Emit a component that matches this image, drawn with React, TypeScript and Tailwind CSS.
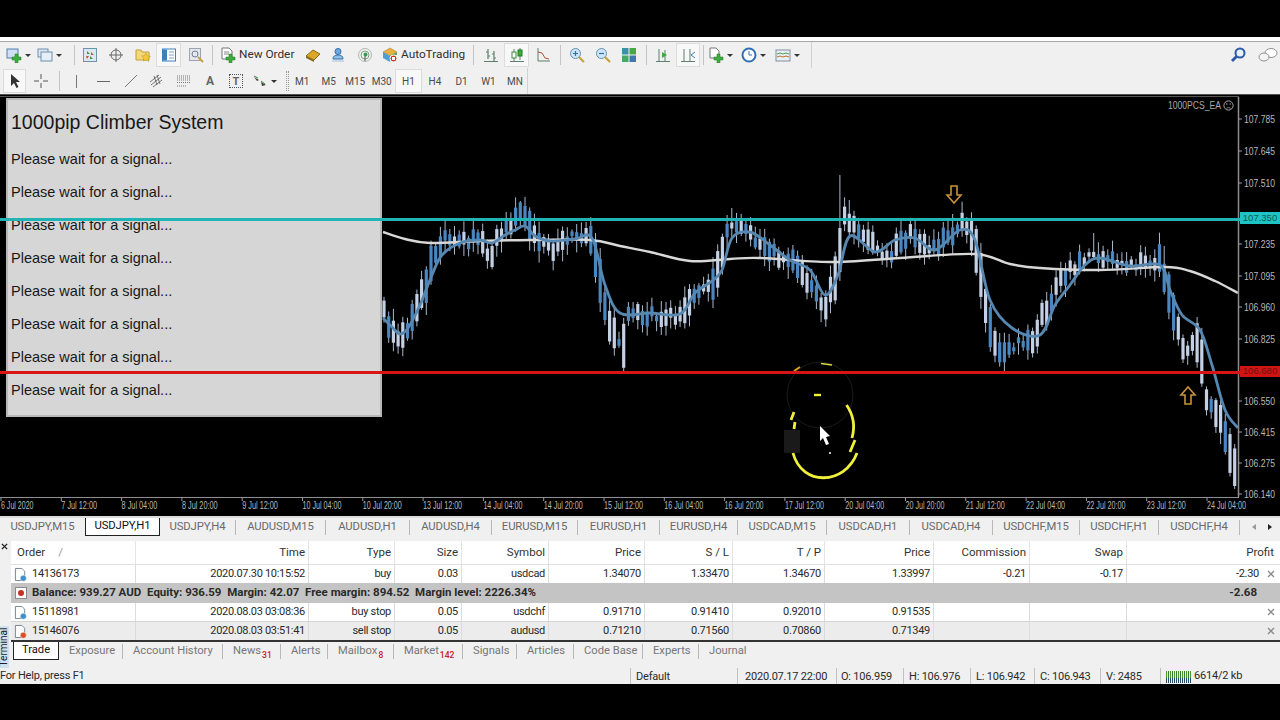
import React from 'react';

// ---- chart data ----
const candlePath: [number, number][] = [
  [383, 312], [392, 330], [402, 340], [412, 322], [425, 290], [436, 250], [445, 240], [460, 238], [478, 240], [490, 258],
  [500, 235], [515, 218], [523, 208], [535, 240], [550, 250], [570, 238], [590, 240], [598, 265], [605, 310], [618, 345],
  [623, 355], [628, 313], [650, 315], [680, 318], [695, 290], [715, 280], [728, 225], [745, 230], [770, 250], [795, 265],
  [815, 290], [825, 308], [838, 270], [844, 215], [860, 230], [875, 250], [890, 255], [910, 232], [930, 250], [950, 235],
  [960, 222], [975, 240], [985, 300], [997, 355], [1010, 345], [1030, 345], [1055, 290], [1070, 270], [1090, 255], [1100, 258],
  [1120, 265], [1160, 262], [1168, 290], [1175, 320], [1185, 350], [1200, 345], [1205, 400], [1215, 410], [1228, 440], [1235, 470], [1238, 450],
];

const emaPoints: [number, number][] = [
  [383, 318], [392, 327], [400, 334], [408, 328], [420, 305], [432, 275], [442, 255], [460, 243], [480, 240], [492, 243], [505, 235], [515, 230],
  [525, 226], [535, 236], [550, 241], [575, 239], [592, 238], [605, 285], [620, 313], [650, 313], [680, 314], [695, 293], [712, 281], [722, 270],
  [732, 238], [750, 232], [770, 245], [790, 260], [810, 270], [825, 295], [838, 275], [850, 236], [875, 252], [895, 240], [915, 238], [935, 250],
  [960, 230], [975, 240], [990, 300], [1012, 328], [1040, 335], [1055, 305], [1070, 285], [1085, 265], [1100, 258], [1130, 266], [1160, 265],
  [1170, 290], [1182, 315], [1200, 330], [1212, 365], [1225, 410], [1238, 428],
];
const maPoints: [number, number][] = [
  [383, 232], [405, 239], [430, 243], [480, 241], [530, 240], [590, 240], [620, 246], [650, 252], [690, 261], [730, 259], [760, 258], [830, 262],
  [900, 258], [975, 254], [1010, 264], [1040, 268], [1100, 270], [1165, 267], [1190, 271], [1215, 281], [1238, 293],
];

const priceLabels: [string, number][] = [
  ['107.785', 119], ['107.645', 151], ['107.510', 183], ['107.235', 244], ['107.095', 276], ['106.960', 307],
  ['106.825', 339], ['106.550', 401], ['106.415', 432], ['106.275', 463], ['106.140', 494],
];

const timeLabels = [
  '6 Jul 2020', '7 Jul 12:00', '8 Jul 04:00', '8 Jul 20:00', '9 Jul 12:00', '10 Jul 04:00', '10 Jul 20:00',
  '13 Jul 12:00', '14 Jul 04:00', '14 Jul 20:00', '15 Jul 12:00', '16 Jul 04:00', '16 Jul 20:00', '17 Jul 12:00',
  '20 Jul 04:00', '20 Jul 20:00', '21 Jul 12:00', '22 Jul 04:00', '22 Jul 20:00', '23 Jul 12:00', '24 Jul 04:00',
];

function smooth(p: [number, number][]) {
  let d = `M${p[0][0]} ${p[0][1]}`;
  for (let i = 0; i < p.length - 1; i++) {
    const a = p[Math.max(i - 1, 0)];
    const b = p[i];
    const c = p[i + 1];
    const e = p[Math.min(i + 2, p.length - 1)];
    d += `C${b[0] + (c[0] - a[0]) / 6} ${b[1] + (c[1] - a[1]) / 6} ${c[0] - (e[0] - b[0]) / 6} ${c[1] - (e[1] - b[1]) / 6} ${c[0]} ${c[1]}`;
  }
  return d;
}

function centerAt(x: number) {
  for (let i = 1; i < candlePath.length; i++) {
    const [x0, y0] = candlePath[i - 1];
    const [x1, y1] = candlePath[i];
    if (x <= x1) return y0 + ((y1 - y0) * (x - x0)) / (x1 - x0);
  }
  return 450;
}

function makeCandles() {
  let seed = 77;
  const rnd = () => {
    seed = (seed * 16807) % 2147483647;
    return seed / 2147483647;
  };
  const list = [];
  const spikes: Record<number, number> = { 842: 175, 851: 200, 522: 201, 730: 208, 955: 214, 1092: 233, 1162: 246, 623: 374 };
  for (let x = 384; x < 1238; x += 4.7) {
    const slope = Math.abs(centerAt(x + 4.7) - centerAt(x));
    const y = centerAt(x) + (rnd() - 0.5) * 10;
    const size = Math.min(3 + rnd() * 13 + slope * 1.3, 44);
    const top = y - size / 2;
    const bottom = y + size / 2;
    let hi = top - 2 - rnd() * 10;
    let lo = Math.min(bottom + 2 + rnd() * 10, 489);
    for (const k of Object.keys(spikes)) {
      const sx = Number(k);
      if (Math.abs(sx - x) < 2.4) {
        if (spikes[sx] < y) hi = spikes[sx];
        else lo = spikes[sx];
      }
    }
    list.push({ x, top, size: Math.min(size, 486 - top), hi, lo, up: rnd() > 0.5 });
  }
  return list;
}
const candles = makeCandles();

function Chart() {
  return (
    <svg viewBox="0 95 1280 421" className="block h-[421px] w-[1280px]">
      {candles.map((c, i) => (
        <g key={i}>
          <line x1={c.x} x2={c.x} y1={c.hi} y2={c.lo} stroke="#a8b8cc" strokeWidth="1" />
          <rect x={c.x - 1.6} y={c.top} width="3.2" height={c.size} fill={c.up ? '#4a86c0' : '#c4d0e4'} />
        </g>
      ))}
      <path d={smooth(maPoints)} fill="none" stroke="#d8d8d8" strokeWidth="2.4" />
      <path d={smooth(emaPoints)} fill="none" stroke="#5587b0" strokeWidth="2.8" />

      {/* arrows */}
      <path d="M951 186h6v9h4l-7 8-7-8h4z" fill="none" stroke="#c8923c" strokeWidth="1.6" />
      <path d="M1185 404v-9h-4l7-8 7 8h-4v9z" fill="none" stroke="#c8923c" strokeWidth="1.6" />

      {/* axes */}
      <line x1="1238.5" x2="1238.5" y1="97" y2="497" stroke="#8e8e8e" strokeWidth="1.5" />
      <line x1="0" x2="1239" y1="497.5" y2="497.5" stroke="#8e8e8e" strokeWidth="1" />
      <line x1="0" x2="1239" y1="96.5" y2="96.5" stroke="#555555" strokeWidth="1" />
      {priceLabels.map(([label, y]) => (
        <g key={label}>
          <line x1="1238" x2="1242" y1={y} y2={y} stroke="#9a9a9a" />
          <text x="1244" y={y + 3.5} fill="#b8b8b8" fontSize="10" fontFamily="Liberation Sans, sans-serif" textLength="31" lengthAdjust="spacingAndGlyphs">
            {label}
          </text>
        </g>
      ))}
      {timeLabels.map((label, i) => (
        <g key={label}>
          <line x1={1 + i * 60.3} x2={1 + i * 60.3} y1="497" y2="501" stroke="#9a9a9a" />
          <text x={1 + i * 60.3} y="509" fill="#b8b8b8" fontSize="10" fontFamily="Liberation Sans, sans-serif" textLength={label.length * 3.25} lengthAdjust="spacingAndGlyphs">
            {label}
          </text>
        </g>
      ))}

      {/* expert label */}
      <text x="1168" y="108.5" fill="#a8a8a8" fontSize="10" fontFamily="Liberation Sans, sans-serif" textLength="53" lengthAdjust="spacingAndGlyphs">1000PCS_EA</text>
      <circle cx="1228.5" cy="105.5" r="4.6" fill="none" stroke="#a8a8a8" />
      <circle cx="1226.8" cy="104" r="0.7" fill="#a8a8a8" />
      <circle cx="1230.2" cy="104" r="0.7" fill="#a8a8a8" />
      <path d="M1226.3 108.4q2.2-2 4.4 0" fill="none" stroke="#a8a8a8" strokeWidth="0.8" />

      {/* highlight circle, broken up */}
      <circle cx="820" cy="395" r="33" fill="none" stroke="#1c1c1c" />
      <rect x="784" y="430" width="16" height="23" fill="#1a1a1a" />
      <path d="M846.5 405Q857 420 852 438M855 440L850 452M793 453C802 487 845 485 857 453" fill="none" stroke="#f0f03c" strokeWidth="2.800" />
      <path d="M794 412L791 420M795 422L794 429" fill="none" stroke="#f0f03c" strokeWidth="2.800" />
      <path d="M794 371L800 367" stroke="#e0a020" strokeWidth="2" />
      <path d="M821 363.5L832 365" stroke="#d8d840" strokeWidth="1.4" />
      <path d="M814 395H821" stroke="#f0f03c" strokeWidth="2.400" />
      <path d="M820 426V441L823 438L826 445L829 444L826 437L830 436Z" fill="#ffffff" />
      <circle cx="830" cy="453" r="1" fill="#ffffff" />
    </svg>
  );
}

// ---- toolbar icons ----
const Ic = ({ children }: { children: React.ReactNode }) => (
  <svg viewBox="0 0 16 16" className="h-4 w-4 shrink-0">{children}</svg>
);
const Plus = () => <path d="M9 7h3v3h3v3h-3v3H9v-3H6v-3h3z" fill="#3cae3c" stroke="#207a20" strokeWidth="0.5" />;
const Dd = () => <span className="ml-[3px] h-0 w-0 border-x-[3px] border-t-[3px] border-x-transparent border-t-[#333333]" />;

const NewChart = () => <Ic><rect x="1" y="2" width="11" height="9" fill="#cfe0f2" stroke="#4f7fae" /><Plus /></Ic>;
const Profiles = () => <Ic><rect x="1" y="2" width="10" height="8" fill="#dde8f3" stroke="#6d8db0" /><rect x="4" y="5" width="11" height="9" fill="#e8eef6" stroke="#6d8db0" /></Ic>;
const MarketWatch = () => <Ic><rect x="1.5" y="1.5" width="13" height="13" fill="#dbe8f2" stroke="#6e93ad" /><path d="M5 4l3 3H5zM8 9l3 3H8z" fill="#3a9a3a" /><path d="M9 5l3 3-3 0zM4 9h3l-2 3z" fill="#d85020" /></Ic>;
const Target = () => <Ic><circle cx="8" cy="8" r="5" fill="none" stroke="#666666" /><path d="M8 1v14M1 8h14" stroke="#666666" /></Ic>;
const FolderStar = () => <Ic><path d="M1 3h5l1 2h7v8H1z" fill="#f4d87a" stroke="#c0a040" /><path d="M11 6l1.4 3 3 .4-2.2 2 .6 3-2.8-1.5L8.200 14l.6-3-2.2-2 3-.4z" fill="#f6c93a" stroke="#b09020" strokeWidth="0.5" /></Ic>;
const Navigator = () => <Ic><rect x="1.5" y="2" width="13" height="12" fill="#ffffff" stroke="#3f7fb8" /><rect x="2" y="2.500" width="4" height="11" fill="#3f7fb8" /><path d="M8 5h5M8 8h5M8 11h5" stroke="#7f9fc0" /></Ic>;
const Tester = () => <Ic><rect x="1.5" y="1.5" width="11" height="12" fill="#e4e8ee" stroke="#9aa4b0" /><circle cx="7" cy="7" r="3" fill="none" stroke="#708090" /><path d="M10 10l5 5" stroke="#c8a040" strokeWidth="2" /></Ic>;
const NewOrder = () => <Ic><path d="M2 1h7l3 3v8H2z" fill="#ffffff" stroke="#777777" /><path d="M4 5h5M4 7h5" stroke="#888888" /><Plus /></Ic>;
const Gold = () => <Ic><path d="M1 9l7-6 7 4-6 6z" fill="#d8a828" stroke="#8a6a18" /><path d="M1 9l8 4v2L1 11z" fill="#8a6a18" /></Ic>;
const Person = () => <Ic><circle cx="8" cy="4.500" r="3" fill="#6fa8dc" stroke="#2f6fa8" /><path d="M3 12q0-4 5-4t5 4z" fill="#8fc0e8" stroke="#2f6fa8" /><path d="M2 13h12v2H2z" fill="#c8d8e8" /></Ic>;
const Signal = () => <Ic><circle cx="8" cy="8" r="6.500" fill="none" stroke="#b0b8b0" /><circle cx="8" cy="8" r="4" fill="none" stroke="#80a880" /><circle cx="8.500" cy="7.500" r="2" fill="#3a9a5a" /><path d="M8 9v5" stroke="#555555" /></Ic>;
const Auto = () => <Ic><path d="M1 5l7-4 7 4-7 4z" fill="#e8b040" stroke="#a07820" strokeWidth="0.5" /><path d="M1 5v6l7 4V9z" fill="#4f9fd0" /><path d="M15 5v3H8V9z" fill="#58a858" /><circle cx="11.500" cy="11.500" r="3.500" fill="#d03020" stroke="#ffffff" /><rect x="10" y="10" width="3" height="3" fill="#ffffff" /></Ic>;
const Bars = () => <Ic><path d="M5 2v10M3 5h2M5 9h2M11 4v10M9 7h2M11 11h2M1 14.500h14" stroke="#5f7f6f" strokeWidth="1.2" /></Ic>;
const Candle = () => <Ic><path d="M5 2v12M11 1v12M1 14.500h14" stroke="#5f7f6f" /><rect x="3" y="5" width="4" height="6" fill="#ffffff" stroke="#3a8a3a" /><rect x="9" y="3" width="4" height="6" fill="#3aae3a" stroke="#207a20" /></Ic>;
const LineC = () => <Ic><path d="M3 1v13h12" fill="none" stroke="#5f7f6f" /><path d="M3 5l4 1 3 5 4 1" fill="none" stroke="#b05030" /></Ic>;
const ZoomIn = () => <Ic><circle cx="6.500" cy="6.500" r="5" fill="#cfe4f4" stroke="#5f8fb4" /><path d="M4 6.500h5M6.500 4v5" stroke="#2f6fa8" strokeWidth="1.200" /><path d="M10 10l5 5" stroke="#c8a040" strokeWidth="2.200" /></Ic>;
const ZoomOut = () => <Ic><circle cx="6.500" cy="6.500" r="5" fill="#cfe4f4" stroke="#5f8fb4" /><path d="M4 6.500h5" stroke="#2f6fa8" strokeWidth="1.200" /><path d="M10 10l5 5" stroke="#c8a040" strokeWidth="2.200" /></Ic>;
const Tile = () => <Ic><rect x="1" y="1" width="6.500" height="6.500" fill="#3f8fa8" /><rect x="8.500" y="1" width="6.500" height="6.500" fill="#48a848" /><rect x="1" y="8.500" width="6.500" height="6.500" fill="#48a868" /><rect x="8.500" y="8.500" width="6.500" height="6.500" fill="#3f78b0" /></Ic>;
const AutoScroll = () => <Ic><path d="M4 2v12M1 14.500h14M10 3v11" stroke="#5f7f6f" /><path d="M7 5l5 3-5 3z" fill="#3aae3a" /></Ic>;
const Shift = () => <Ic><path d="M4 2v12M1 14.500h14M10 2v12" stroke="#5f7f6f" /><path d="M15 5l-4 3 4 3" fill="none" stroke="#3f7fb8" /></Ic>;
const Indicators = () => <Ic><path d="M2 1h6l3 3v7H2z" fill="#ffffff" stroke="#777777" /><Plus /></Ic>;
const Clock = () => <Ic><circle cx="8" cy="8" r="6.500" fill="#ffffff" stroke="#2f6fb8" strokeWidth="2" /><path d="M8 4v4h3" fill="none" stroke="#2f6fb8" /></Ic>;
const Template = () => <Ic><rect x="1" y="3" width="14" height="11" fill="#e8eef4" stroke="#7f8f9f" /><path d="M2 7l3-1 3 1 3-1 3 1" fill="none" stroke="#4f9f4f" /><path d="M2 10l3-1 3 1 3-1 3 1" fill="none" stroke="#c07030" /></Ic>;

const Sep = () => <span className="mx-auto h-[20px] w-px bg-[#c4c4c4]" />;
const Slot = ({ className, children }: { className: string; children?: React.ReactNode }) => (
  <div className={`flex h-full shrink-0 items-center justify-center ${className}`}>{children}</div>
);
const Active = ({ className, children }: { className: string; children: React.ReactNode }) => (
  <div className={`flex shrink-0 items-center justify-center border border-[#dcdcdc] bg-[#f8f8f8] ${className}`}>{children}</div>
);

function TopRow() {
  return (
    <div className="flex h-[26px] bg-[#f0f0f0]">
      <div className="flex h-full w-[812px] items-center border-r border-[#d2d2d2] pl-[6px] text-[11.800px] text-[#303030]">
        <Slot className="w-[30px] justify-start"><NewChart /><Dd /></Slot>
        <Slot className="w-[34px] justify-start pl-[1px]"><Profiles /><Dd /></Slot>
        <Slot className="w-[8px]"><Sep /></Slot>
        <Slot className="w-[24px]"><MarketWatch /></Slot>
        <Slot className="w-[28px]"><Target /></Slot>
        <Slot className="w-[26px]"><FolderStar /></Slot>
        <Active className="h-[24px] w-[25px]"><Navigator /></Active>
        <Slot className="w-[29px]"><Tester /></Slot>
        <Slot className="w-[4px]"><Sep /></Slot>
        <Slot className="w-[86px] justify-start pl-[6px]"><NewOrder /><span className="ml-[3px] whitespace-nowrap">New Order</span></Slot>
        <Slot className="w-[25px]"><Gold /></Slot>
        <Slot className="w-[26px]"><Person /></Slot>
        <Slot className="w-[27px]"><Signal /></Slot>
        <Slot className="w-[90px] justify-start pl-[4px]"><Auto /><span className="ml-[3px] whitespace-nowrap">AutoTrading</span></Slot>
        <Slot className="w-[10px]"><Sep /></Slot>
        <Slot className="w-[26px]"><Bars /></Slot>
        <Active className="h-[24px] w-[25px]"><Candle /></Active>
        <Slot className="w-[27px]"><LineC /></Slot>
        <Slot className="w-[8px]"><Sep /></Slot>
        <Slot className="w-[26px]"><ZoomIn /></Slot>
        <Slot className="w-[26px]"><ZoomOut /></Slot>
        <Slot className="w-[26px]"><Tile /></Slot>
        <Slot className="w-[8px]"><Sep /></Slot>
        <Slot className="w-[26px]"><AutoScroll /></Slot>
        <Active className="h-[24px] w-[24px]"><Shift /></Active>
        <Slot className="w-[6px]"><Sep /></Slot>
        <Slot className="w-[33px] justify-start pl-[2px]"><Indicators /><Dd /></Slot>
        <Slot className="w-[34px] justify-start pl-[2px]"><Clock /><Dd /></Slot>
        <Slot className="w-[30px] justify-start pl-[2px]"><Template /><Dd /></Slot>
      </div>
      <div className="flex flex-1 items-center pl-[418px]">
        <svg viewBox="0 0 16 16" className="h-4 w-4">
          <circle cx="10" cy="6" r="4.500" fill="#e8f0fa" stroke="#2a5aa8" strokeWidth="2" />
          <path d="M6.500 9.500L2 14" stroke="#2a5aa8" strokeWidth="2.800" />
        </svg>
        <svg viewBox="0 0 20 16" className="ml-[12px] h-[16px] w-[20px]">
          <ellipse cx="13" cy="6" rx="6" ry="4.500" fill="#ffffff" stroke="#909090" />
          <ellipse cx="6" cy="10" rx="5" ry="4" fill="#f4f4f4" stroke="#909090" />
        </svg>
      </div>
    </div>
  );
}

const periods = ['M1', 'M5', 'M15', 'M30'];

function BottomRow() {
  return (
    <div className="flex h-[26px] bg-[#f0f0f0]">
      <div className="flex h-full w-[528px] items-center border-r border-[#d2d2d2] pl-[3px] text-[10px] text-[#4a4a4a]">
        <Active className="h-[24px] w-[23px]">
          <svg viewBox="0 0 16 16" className="h-4 w-4"><path d="M4 1v12l3-3 2.500 5 2-1L9 9h4z" fill="#333333" /></svg>
        </Active>
        <Slot className="w-[30px]">
          <svg viewBox="0 0 16 16" className="h-4 w-4"><path d="M8 1v5M8 10v5M1 8h5M10 8h5" stroke="#555555" /></svg>
        </Slot>
        <Slot className="w-[7px]"><Sep /></Slot>
        <Slot className="w-[27px]"><span className="h-[13px] w-px bg-[#777777]" /></Slot>
        <Slot className="w-[27px]"><span className="h-px w-[13px] bg-[#666666]" /></Slot>
        <Slot className="w-[27px]">
          <svg viewBox="0 0 16 16" className="h-4 w-4"><path d="M2 14L14 2" stroke="#777777" /></svg>
        </Slot>
        <Slot className="w-[26px]">
          <svg viewBox="0 0 16 16" className="h-4 w-4"><path d="M1 9L10 2M2 12L12 4M4 14L13 7M5 3l3 9M8 2l3 9" stroke="#666666" strokeWidth="0.900" /></svg>
        </Slot>
        <Slot className="w-[27px]">
          <svg viewBox="0 0 16 16" className="h-4 w-4"><path d="M1 3h14M1 5h14M1 7h14M1 9.500h14M1 13h9" stroke="#777777" strokeDasharray="1 1" /></svg>
        </Slot>
        <Slot className="w-[26px]"><span className="text-[12px] font-bold text-[#666666]">A</span></Slot>
        <Slot className="w-[26px]">
          <div className="flex h-[14px] w-[14px] items-center justify-center border border-dotted border-[#555555] text-[11px] font-bold leading-none text-[#666666]">T</div>
        </Slot>
        <Slot className="w-[28px] justify-end">
          <svg viewBox="0 0 16 16" className="h-4 w-4"><path d="M2 4l5 3-2 1zM9 9l5 3-4 1z" fill="#444444" /><path d="M2 3l4 2M9 8l4 3" stroke="#3a8a3a" /></svg>
          <Dd />
        </Slot>
        <Slot className="w-[12px] justify-end"><span className="h-[20px] w-[3px] border-x border-dotted border-[#9a9a9a]" /></Slot>
        {periods.map(p => (
          <div key={p} className="flex h-full w-[26.500px] shrink-0 items-center justify-center">{p}</div>
        ))}
        <Active className="h-[24px] w-[27px] bg-[#f8f8f8]">H1</Active>
        <div className="flex h-full w-[26px] shrink-0 items-center justify-center">H4</div>
        <div className="flex h-full w-[27px] shrink-0 items-center justify-center">D1</div>
        <div className="flex h-full w-[27px] shrink-0 items-center justify-center">W1</div>
        <div className="flex h-full w-[26px] shrink-0 items-center justify-center">MN</div>
      </div>
    </div>
  );
}

// ---- signal panel over the chart ----
const signalRows = [0, 1, 2, 3, 4, 5, 6, 7];

function SignalPanel() {
  return (
    <div className="absolute left-[6px] top-[3px] h-[319px] w-[376px] border-2 border-[#b8b8b8] bg-[#d6d6d6] pl-[3px] font-['Liberation_Sans',sans-serif] text-[#181818]">
      <div className="pt-[10px] text-[19.500px] leading-[24px]">1000pip Climber System</div>
      <div className="mt-[9px] flex flex-col">
        {signalRows.map(r => (
          <div key={r} className="flex h-[33px] items-center text-[14.500px]">Please wait for a signal...</div>
        ))}
      </div>
    </div>
  );
}

// ---- symbol tabs ----
const chartTabs = [
  { label: 'USDJPY,M15', w: 'w-[85px]' },
  { label: 'USDJPY,H1', w: 'w-[75px]', active: true },
  { label: 'USDJPY,H4', w: 'w-[76px]' },
  { label: 'AUDUSD,M15', w: 'w-[90px]' },
  { label: 'AUDUSD,H1', w: 'w-[84px]' },
  { label: 'AUDUSD,H4', w: 'w-[82px]' },
  { label: 'EURUSD,M15', w: 'w-[86px]' },
  { label: 'EURUSD,H1', w: 'w-[82px]' },
  { label: 'EURUSD,H4', w: 'w-[78px]' },
  { label: 'USDCAD,M15', w: 'w-[89px]' },
  { label: 'USDCAD,H1', w: 'w-[83px]' },
  { label: 'USDCAD,H4', w: 'w-[83px]' },
  { label: 'USDCHF,M15', w: 'w-[87px]' },
  { label: 'USDCHF,H1', w: 'w-[79px]' },
  { label: 'USDCHF,H4', w: 'w-[81px]' },
];

function ChartTabs() {
  return (
    <div className="flex h-[25px] items-start border-t-2 border-[#dcdcdc] bg-[#f0f0f0] text-[11.300px] tracking-[-0.1px] text-[#6a6a6a]">
      {chartTabs.map((t, i) =>
        t.active ? (
          <div key={t.label} className={`flex h-[18px] shrink-0 items-center justify-center border-x border-b border-[#222222] bg-white text-[#111111] ${t.w}`}>
            {t.label}
          </div>
        ) : (
          <div key={t.label} className={`mt-[2px] flex h-[15px] shrink-0 items-center justify-center ${t.w} ${i > 1 ? 'border-r border-[#b8b8b8]' : ''}`}>
            {t.label}
          </div>
        ),
      )}
      <div className="mt-[6px] ml-[12px] flex items-center gap-[12px]">
        <span className="h-0 w-0 border-y-[3px] border-r-[4px] border-y-transparent border-r-[#999999]" />
        <span className="h-0 w-0 border-y-[3px] border-l-[4px] border-y-transparent border-l-[#222222]" />
      </div>
    </div>
  );
}

// ---- terminal ----
const colGrid = 'grid grid-cols-[125px_173px_86px_67px_87px_96px_88px_92px_109px_96px_97px_153px]';
const headers = ['Time', 'Type', 'Size', 'Symbol', 'Price', 'S / L', 'T / P', 'Price', 'Commission', 'Swap'];

const DocIcon = ({ dot }: { dot: string }) => (
  <svg viewBox="0 0 14 16" className="ml-[3px] h-[15px] w-[13px] shrink-0">
    <path d="M1.500 1.500h7l3 3v10h-10z" fill="#ffffff" stroke="#6f7f8f" />
    <circle cx="10" cy="12" r="3.300" fill={dot} stroke="#ffffff" strokeWidth="0.500" />
  </svg>
);

const Closer = () => (
  <svg viewBox="0 0 8 8" className="h-2 w-2"><path d="M1 1l6 6M7 1L1 7" stroke="#8a8a8a" strokeWidth="1.300" /></svg>
);

function OrderRow({ id, dot, cells, profit, className }: { id: string; dot: string; cells: string[]; profit: string; className: string }) {
  return (
    <div className={`${colGrid} tracking-[-0.3px] ${className}`}>
      <div className="flex items-center gap-[5px] border-r border-[#dcdcdc]">
        <DocIcon dot={dot} />
        <span>{id}</span>
      </div>
      {cells.map((c, i) => (
        <div key={i} className="flex items-center justify-end border-r border-[#dcdcdc] pr-[3px]">{c}</div>
      ))}
      <div className="flex items-center justify-end pr-[5px]">
        <span className="mr-[8px]">{profit}</span>
        <Closer />
      </div>
    </div>
  );
}

const termTabs = [
  { label: 'Exposure', w: 'w-[64px]' },
  { label: 'Account History', w: 'w-[100px]' },
  { label: 'News', sub: '31', w: 'w-[58px]' },
  { label: 'Alerts', w: 'w-[47px]' },
  { label: 'Mailbox', sub: '8', w: 'w-[66px]' },
  { label: 'Market', sub: '142', w: 'w-[69px]' },
  { label: 'Signals', w: 'w-[54px]' },
  { label: 'Articles', w: 'w-[57px]' },
  { label: 'Code Base', w: 'w-[69px]' },
  { label: 'Experts', w: 'w-[56px]' },
  { label: 'Journal', w: 'w-[52px]' },
];

function Terminal() {
  return (
    <div className="flex h-[127px] bg-[#f0f0f0] text-[11px] text-[#2a2a2a]">
      <div className="flex w-[11px] shrink-0 flex-col justify-between">
        <div className="pl-[1px] pt-[2px]">
          <svg viewBox="0 0 8 8" className="h-[7px] w-[7px]"><path d="M1 1l6 6M7 1L1 7" stroke="#222222" strokeWidth="1.600" /></svg>
        </div>
        <div className="flex h-[42px] w-[9px] items-center justify-center bg-[#cfe0ee]">
          <span className="-rotate-90 whitespace-nowrap text-[10px] leading-none text-[#222222]">Terminal</span>
        </div>
      </div>
      <div className="flex min-w-0 flex-1 flex-col">
        <div className={`${colGrid} h-[23px] bg-white text-[11.500px] text-[#333333]`}>
          <div className="flex items-center border-r border-[#e4e4e4] pl-[6px]">
            Order<span className="ml-[13px] text-[#9a9a9a]">/</span>
          </div>
          {headers.map((h, i) => (
            <div key={i} className="flex items-center justify-end border-r border-[#e4e4e4] pr-[3px]">{h}</div>
          ))}
          <div className="flex items-center justify-end pr-[6px]">Profit</div>
        </div>
        <OrderRow
          className="h-[19px] border-t border-[#e0e0e0] bg-white"
          id="14136173"
          dot="#3f8fc8"
          cells={['2020.07.30 10:15:52', 'buy', '0.03', 'usdcad', '1.34070', '1.33470', '1.34670', '1.33997', '-0.21', '-0.17']}
          profit="-2.30"
        />
        <div className="flex h-[20px] items-center justify-between bg-[#c4c4c4] pr-[23px] text-[11.500px] font-bold">
          <div className="flex items-center">
            <div className="ml-[4px] flex h-[12px] w-[12px] items-center justify-center border border-[#8a8a8a] bg-white">
              <span className="h-[6px] w-[6px] rounded-full bg-[#c83020]" />
            </div>
            <span className="ml-[5px] whitespace-pre">Balance: 939.27 AUD  Equity: 936.59  Margin: 42.07  Free margin: 894.52  Margin level: 2226.34%</span>
          </div>
          <span>-2.68</span>
        </div>
        <OrderRow
          className="h-[18px] bg-white"
          id="15118981"
          dot="#3f8fc8"
          cells={['2020.08.03 03:08:36', 'buy stop', '0.05', 'usdchf', '0.91710', '0.91410', '0.92010', '0.91535', '', '']}
          profit=""
        />
        <OrderRow
          className="h-[19px] border-t border-[#d4d4d4] bg-[#ececec]"
          id="15146076"
          dot="#d8502a"
          cells={['2020.08.03 03:51:41', 'sell stop', '0.05', 'audusd', '0.71210', '0.71560', '0.70860', '0.71349', '', '']}
          profit=""
        />
        <div className="flex h-[28px] items-start border-t-2 border-[#333333] bg-[#f0f0f0] pl-[2px] text-[11.200px] text-[#777777]">
          <div className="flex h-[18px] w-[46px] shrink-0 items-center justify-center border-x border-b border-[#222222] bg-white text-[#111111]">Trade</div>
          {termTabs.map((t, i) => (
            <div key={t.label} className={`mt-[2px] flex h-[15px] shrink-0 items-center pl-[10px] ${t.w} ${i < termTabs.length - 1 ? 'border-r border-[#b8b8b8]' : ''}`}>
              {t.label}
              {t.sub && <span className="mt-[7px] ml-[1px] text-[8.500px] font-medium text-[#c82020]">{t.sub}</span>}
            </div>
          ))}
        </div>
      </div>
    </div>
  );
}

// ---- status bar ----
const statusCells = [
  { text: '2020.07.17 22:00', w: 'w-[99px]', pl: 'pl-[7px]' },
  { text: 'O: 106.959', w: 'w-[67px]', pl: 'pl-[4px]' },
  { text: 'H: 106.976', w: 'w-[67px]', pl: 'pl-[5px]' },
  { text: 'L: 106.942', w: 'w-[64px]', pl: 'pl-[5px]' },
  { text: 'C: 106.943', w: 'w-[66px]', pl: 'pl-[5px]' },
  { text: 'V: 2485', w: 'w-[60px]', pl: 'pl-[5px]' },
];

function StatusBar() {
  return (
    <div className="flex h-[16px] items-center bg-[#f0f0f0] text-[11px] tracking-[-0.2px] text-[#2a2a2a]">
      <div className="w-[630px] shrink-0 leading-[18px]">For Help, press F1</div>
      <div className="h-full w-[107px] shrink-0 border-l border-[#c0c0c0] pl-[5px] leading-[18px]">Default</div>
      {statusCells.map(c => (
        <div key={c.text} className={`h-full shrink-0 border-l border-[#c0c0c0] leading-[18px] ${c.w} ${c.pl}`}>{c.text}</div>
      ))}
      <div className="flex h-full items-center border-l border-[#c0c0c0] pl-[4px]">
        <svg viewBox="0 0 28 14" className="h-[14px] w-[28px]">
          {[1, 3, 5, 7, 9, 11, 13, 15, 17, 19, 21, 23, 25].map((x, i) => (
            <g key={x}>
              <rect x={x} y={2} width="1" height="12" fill={i % 2 ? '#3a7a3a' : '#4a9a2a'} />
              <rect x={x} y={9} width="1" height="5" fill="#2a4a6a" />
            </g>
          ))}
        </svg>
        <span className="ml-[1px] whitespace-nowrap">6614/2 kb</span>
      </div>
    </div>
  );
}

export default function App() {
  return (
    <div className="flex h-[720px] w-[1280px] flex-col overflow-hidden bg-black font-['Roboto',sans-serif]">
      <div className="h-[37px] shrink-0 bg-black" />
      <div className="h-[5px] shrink-0 border-b border-[#a8a8a8] bg-white" />
      <TopRow />
      <BottomRow />
      <div className="h-[1px] shrink-0 bg-[#505050]" />
      <div className="relative shrink-0 bg-black">
        <Chart />
        <SignalPanel />
        {/* level lines lie over the panel */}
        <div className="absolute left-0 top-[123px] h-[3px] w-[1240px] bg-[#20b4b4]" />
        <div className="absolute left-0 top-[275.500px] h-[3px] w-[1240px] bg-[#d81414]" />
        <div className="absolute left-[1240px] top-[117px] flex h-[12px] w-[40px] items-center justify-center bg-[#1ec4c4] font-['Liberation_Sans',sans-serif] text-[9.500px] text-[#0a5a5a]">107.350</div>
        <div className="absolute left-[1240px] top-[271px] flex h-[11px] w-[40px] items-center justify-center bg-[#d01414] font-['Liberation_Sans',sans-serif] text-[9.500px] text-[#701010]">106.680</div>
      </div>
      <ChartTabs />
      <Terminal />
      <StatusBar />
    </div>
  );
}
